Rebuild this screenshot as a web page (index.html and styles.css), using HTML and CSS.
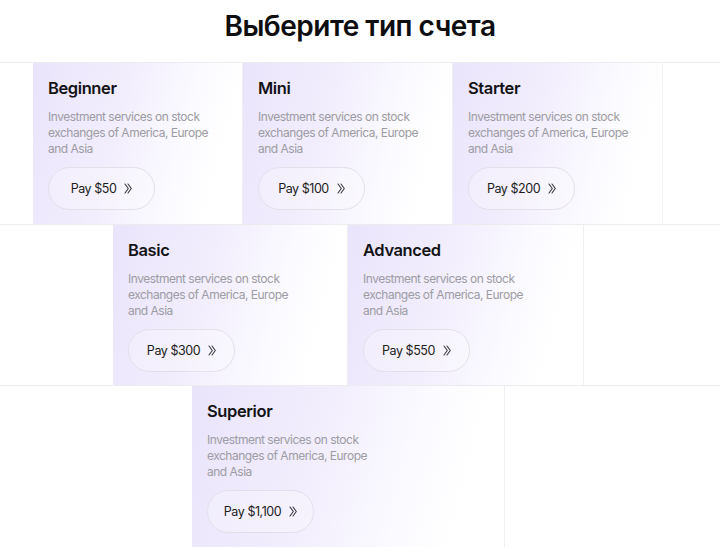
FILE: index.html
```html
<!DOCTYPE html>
<html lang="ru">
<head>
<meta charset="utf-8">
<title>Выберите тип счета</title>
<link rel="stylesheet" href="styles.css">
</head>
<body>
<header class="header">
  <h1 class="title">Выберите тип счета</h1>
</header>
<main class="plans">
  <div class="row row-1">
    <div class="card w-210">
      <h2 class="card-title">Beginner</h2>
      <p class="card-desc">Investment services on stock exchanges of America, Europe and Asia</p>
      <button class="pay">Pay $50 <svg class="chev" viewBox="0 0 8 11" width="8" height="11"><path d="M1 1 L4.3 5.5 L1 10 M4 1 L7.3 5.5 L4 10"/></svg></button>
    </div>
    <div class="card w-210">
      <h2 class="card-title">Mini</h2>
      <p class="card-desc">Investment services on stock exchanges of America, Europe and Asia</p>
      <button class="pay">Pay $100 <svg class="chev" viewBox="0 0 8 11" width="8" height="11"><path d="M1 1 L4.3 5.5 L1 10 M4 1 L7.3 5.5 L4 10"/></svg></button>
    </div>
    <div class="card w-210">
      <h2 class="card-title">Starter</h2>
      <p class="card-desc">Investment services on stock exchanges of America, Europe and Asia</p>
      <button class="pay">Pay $200 <svg class="chev" viewBox="0 0 8 11" width="8" height="11"><path d="M1 1 L4.3 5.5 L1 10 M4 1 L7.3 5.5 L4 10"/></svg></button>
    </div>
  </div>
  <div class="row row-2">
    <div class="card w-235">
      <h2 class="card-title">Basic</h2>
      <p class="card-desc">Investment services on stock exchanges of America, Europe and Asia</p>
      <button class="pay">Pay $300 <svg class="chev" viewBox="0 0 8 11" width="8" height="11"><path d="M1 1 L4.3 5.5 L1 10 M4 1 L7.3 5.5 L4 10"/></svg></button>
    </div>
    <div class="card w-236">
      <h2 class="card-title">Advanced</h2>
      <p class="card-desc">Investment services on stock exchanges of America, Europe and Asia</p>
      <button class="pay">Pay $550 <svg class="chev" viewBox="0 0 8 11" width="8" height="11"><path d="M1 1 L4.3 5.5 L1 10 M4 1 L7.3 5.5 L4 10"/></svg></button>
    </div>
  </div>
  <div class="row row-3">
    <div class="card w-313">
      <h2 class="card-title">Superior</h2>
      <p class="card-desc">Investment services on stock exchanges of America, Europe and Asia</p>
      <button class="pay">Pay $1,100 <svg class="chev" viewBox="0 0 8 11" width="8" height="11"><path d="M1 1 L4.3 5.5 L1 10 M4 1 L7.3 5.5 L4 10"/></svg></button>
    </div>
  </div>
</main>
</body>
</html>
```
FILE: styles.css
```css
* { box-sizing: border-box; }
html, body { margin: 0; padding: 0; background: #fff; }
body {
  font-family: Inter, "Noto Sans", "DejaVu Sans", sans-serif;
  color: #111114;
  width: 720px;
  height: 548px;
  overflow: hidden;
}
.header {
  height: 62px;
  display: flex;
  align-items: center;
  justify-content: center;
  padding-bottom: 10px;
}
.title {
  margin: 0;
  font-size: 28px;
  font-weight: 600;
  letter-spacing: -0.5px;
  color: #0e0e10;
}
.row {
  display: flex;
  border-top: 1px solid #ececef;
  height: 162px;
}
.row-1 { padding-left: 33px; }
.row-2 { padding-left: 113px; height: 161px; }
.row-3 { padding-left: 192px; }
.card {
  flex: none;
  padding: 13px 15px 0 15px;
  border-right: 1px solid #efeef2;
  background: linear-gradient(105deg, #eae4fb 0%, #f2eefd 40%, #fbfaff 68%, #ffffff 85%);
}
.w-210 { width: 210px; }
.w-235 { width: 235px; }
.w-236 { width: 236px; }
.w-313 { width: 313px; }
.card-title {
  margin: 0;
  font-size: 16.5px;
  font-weight: 600;
  line-height: 24px;
  letter-spacing: -0.4px;
  color: #131316;
}
.card-desc {
  margin: 9px 0 0 0;
  width: 166px;
  font-size: 12px;
  line-height: 16px;
  letter-spacing: -0.5px;
  color: #9d9ca3;
}
.pay {
  margin-top: 10px;
  width: 107px;
  height: 43px;
  display: flex;
  align-items: center;
  justify-content: center;
  gap: 8px;
  border: 1px solid #e4e0ea;
  border-radius: 22px;
  background: rgba(255,255,255,0.25);
  font-family: inherit;
  font-size: 12.5px;
  font-weight: 400;
  letter-spacing: -0.45px;
  color: #1c1c20;
  padding: 0;
}
.chev {
  fill: none;
  stroke: #3a3a40;
  stroke-width: 1.1;
  stroke-linecap: round;
  stroke-linejoin: round;
}
```
